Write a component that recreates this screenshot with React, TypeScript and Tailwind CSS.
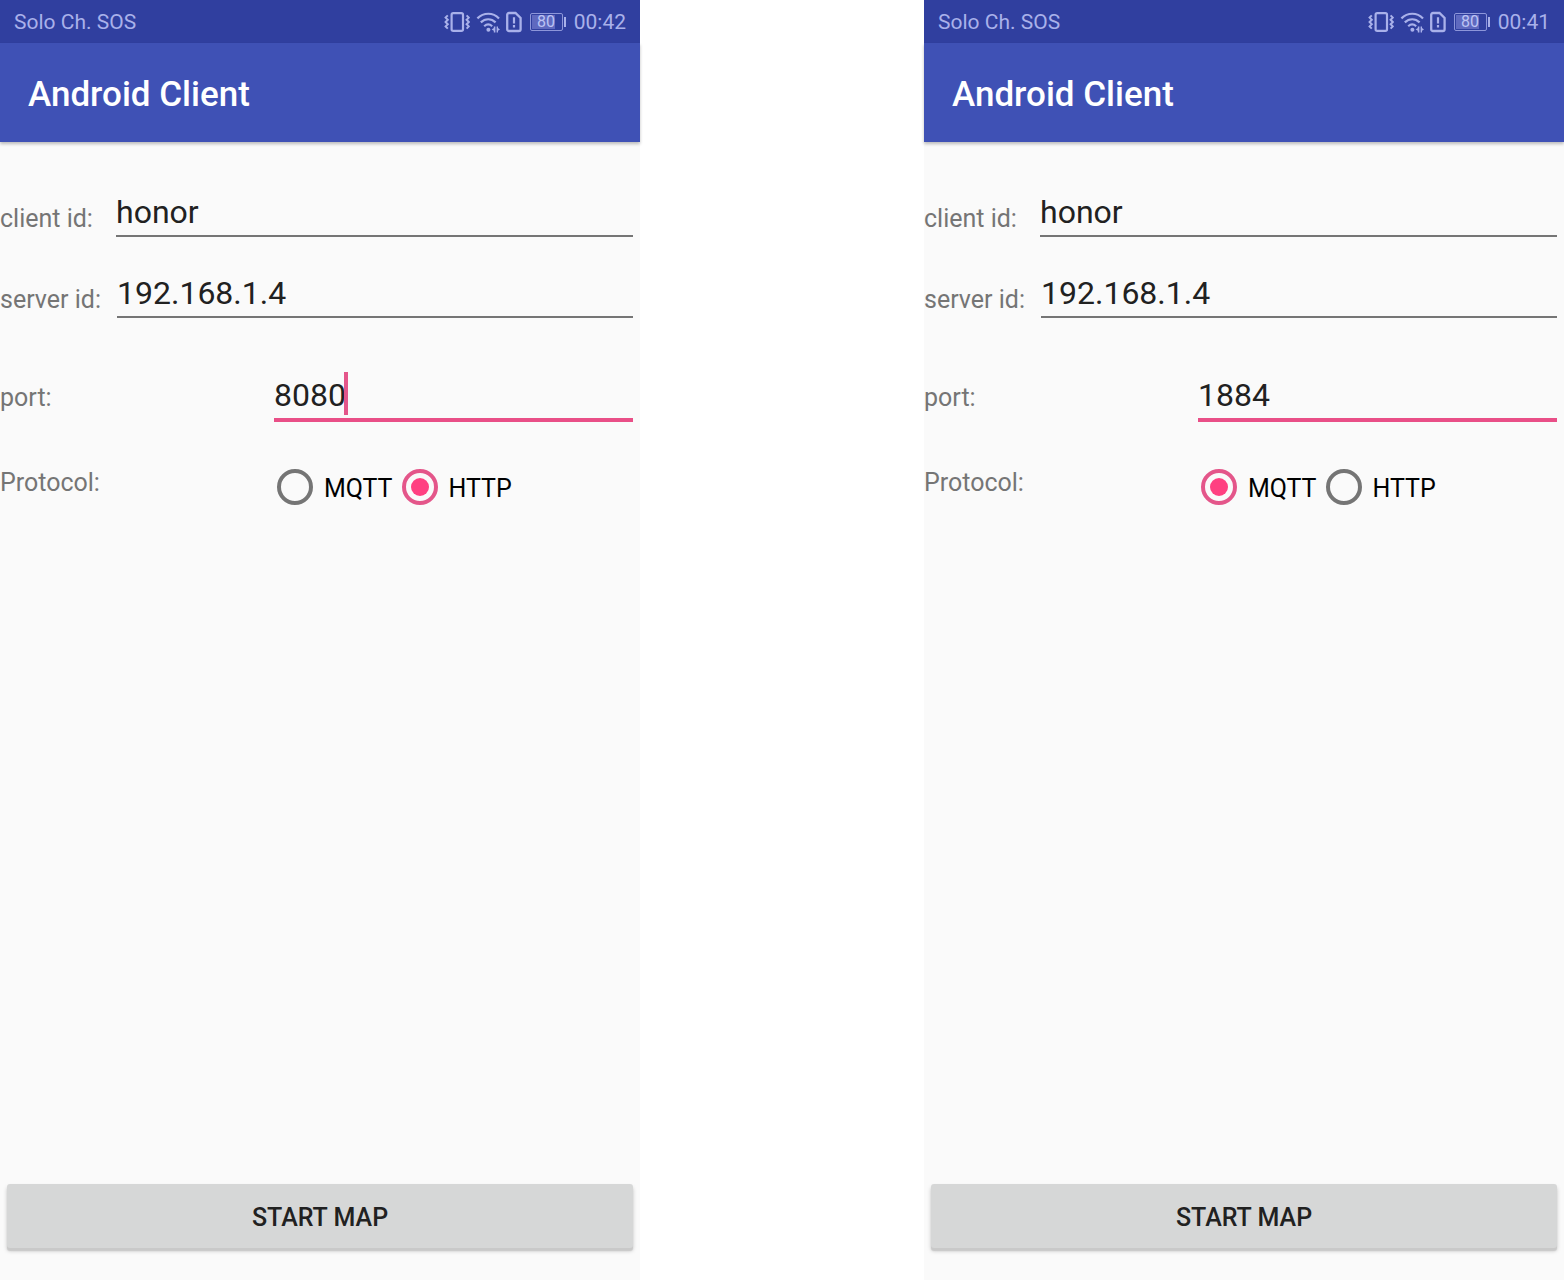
import { useState } from "react";

type Protocol = "MQTT" | "HTTP";

interface PhoneProps {
  name: string;
  time: string;
  port: string;
  protocol: Protocol;
  showCaret?: boolean;
  className?: string;
}

function VibrateIcon() {
  return (
    <svg width="26" height="22" viewBox="0 0 26 22" fill="none" stroke="currentColor" aria-hidden="true">
      <rect x="7.6" y="2.2" width="11.4" height="17.6" rx="1.6" strokeWidth="2.2" />
      <path d="M3.8 4.4L1.6 6.6l2.2 2.2-2.2 2.2 2.2 2.2-2.2 2.2 2.2 2.2M22.6 4.4l2.2 2.2-2.2 2.2 2.2 2.2-2.2 2.2 2.2 2.2-2.2 2.2" strokeWidth="2" />
    </svg>
  );
}

function WifiIcon() {
  return (
    <svg width="24" height="22" viewBox="0 0 24 22" fill="none" stroke="currentColor" aria-hidden="true">
      <path d="M1.4 7.4C7.6 1.2 17 1.2 23 7.4M4.8 11.4c4.4-4.2 10.4-4.2 14.8 0M8.2 15.2c2.5-2.3 5.5-2.3 8 0" strokeWidth="2.2" />
      <circle cx="12.4" cy="18.7" r="2" fill="currentColor" stroke="none" />
      <path d="M19.4 15.4v6h-1.6v-1.6l-2.2-1.4 2.2-1.4v-1.6zM20.6 21.4v-6h1.4V17l2 1.4-2 1.4v1.6z" fill="currentColor" stroke="none" />
    </svg>
  );
}

function SimAlertIcon() {
  return (
    <svg width="16" height="22" viewBox="0 0 16 22" fill="none" stroke="currentColor" aria-hidden="true">
      <path d="M3 2h6.5L14.6 7v11.2a1.8 1.8 0 0 1-1.8 1.8H3a1.8 1.8 0 0 1-1.8-1.8V3.8A1.8 1.8 0 0 1 3 2z" strokeWidth="2.3" />
      <path d="M8 6.2v6.4M8 14v2.4" strokeWidth="2.2" />
    </svg>
  );
}

function Battery() {
  return (
    <div className="flex items-center gap-px" aria-label="Battery 80%">
      <div className="flex h-[18px] w-[33px] rounded-xs border border-[#8d96da] p-px">
        <div className="flex w-[80%] items-center justify-end bg-[#5f69bf] text-base leading-4 text-[#bcc3f4]">
          <span className="pt-px">80</span>
        </div>
      </div>
      <div className="h-[10px] w-[2px] bg-current" />
    </div>
  );
}

const fieldClass =
  "w-0 min-w-0 flex-1 rounded-none bg-transparent p-0 pb-1 text-[32px] leading-[38px] text-[#212121] outline-none";
const labelClass = "shrink-0 text-[25px] leading-[30px] text-[#757575]";
const radioClass =
  "grid size-9 shrink-0 appearance-none place-items-center rounded-full border-4 border-[#757575] before:size-[18px] before:rounded-full before:bg-transparent checked:border-[#e4568a] checked:before:bg-[#ff4081]";

function Phone({ name, time, port, protocol, showCaret, className = "" }: PhoneProps) {
  const [selected, setSelected] = useState<Protocol>(protocol);

  return (
    <section className={"flex min-h-screen min-w-0 flex-col bg-[#fafafa] " + className}>
      <div className="flex h-[43px] items-center justify-between bg-[#303f9f] px-[14px] text-[21px] leading-[26px] text-[#a9b1ea]">
        <span className="pt-px">Solo Ch. SOS</span>
        <div className="flex items-center gap-[6px]">
          <VibrateIcon />
          <WifiIcon />
          <SimAlertIcon />
          <div className="px-[2px]">
            <Battery />
          </div>
          <span className="pt-px">{time}</span>
        </div>
      </div>
      <header className="flex h-[99px] items-center bg-[#3f51b5] px-7 pt-1 shadow-[0_2px_3px_rgba(0,0,0,0.25)]">
        <h1 className="text-[35px] leading-[42px] font-medium text-white">Android Client</h1>
      </header>

      <form className="flex flex-1 flex-col pt-[51px]" onSubmit={(e) => e.preventDefault()}>
        <div className="flex items-end pr-[7px]">
          <label htmlFor={name + "-client"} className={labelClass + " w-[116px] pb-[3px]"}>
            client id:
          </label>
          <input id={name + "-client"} type="text" defaultValue="honor" className={fieldClass + " border-b-2 border-[#757575]"} />
        </div>
        <div className="mt-[37px] flex items-end pr-[7px]">
          <label htmlFor={name + "-server"} className={labelClass + " w-[117px] pb-[3px]"}>
            server id:
          </label>
          <input id={name + "-server"} type="text" defaultValue="192.168.1.4" className={fieldClass + " border-b-2 border-[#757575]"} />
        </div>
        <div className="mt-[58px] flex items-end pr-[7px]">
          <label htmlFor={name + "-port"} className={labelClass + " w-[274px] pb-[9px]"}>
            port:
          </label>
          <div className="relative flex min-w-0 flex-1">
            <input id={name + "-port"} type="text" inputMode="numeric" defaultValue={port} className={fieldClass + " border-b-4 border-[#e94f87]"} />
            {showCaret && <span className="absolute -top-1 left-[70px] h-[43px] w-1 bg-[#e4568a]" />}
          </div>
        </div>
        <fieldset className="mt-[46px] flex items-start">
          <div id={name + "-protocol"} className={labelClass + " w-[277px]"}>
            Protocol:
          </div>
          <div role="radiogroup" aria-labelledby={name + "-protocol"} className="flex gap-[9px] pt-px">
            {(["MQTT", "HTTP"] as Protocol[]).map((option) => (
              <label key={option} className="flex items-center gap-[11px] text-[25px] leading-[30px] text-black">
                <input
                  type="radio"
                  name={name + "-protocol"}
                  value={option}
                  checked={selected === option}
                  onChange={() => setSelected(option)}
                  className={radioClass}
                />
                <span className="pt-[3px]">{option}</span>
              </label>
            ))}
          </div>
        </fieldset>
        <button
          type="submit"
          className="mx-[7px] mt-auto mb-8 h-16 rounded-[3px] bg-[#d6d7d7] pt-[3px] text-[25px] leading-[30px] font-medium text-[#212121] shadow-[0_3px_1px_#c9c9c9,0_3px_4px_rgba(0,0,0,0.2)]"
        >
          START MAP
        </button>
      </form>
    </section>
  );
}

export default function App() {
  return (
    <main className="grid min-h-screen grid-cols-[160fr_71fr_160fr] bg-white font-['Roboto',sans-serif]">
      <Phone name="http" time="00:42" port="8080" protocol="HTTP" showCaret />
      <Phone name="mqtt" time="00:41" port="1884" protocol="MQTT" className="col-start-3" />
    </main>
  );
}
